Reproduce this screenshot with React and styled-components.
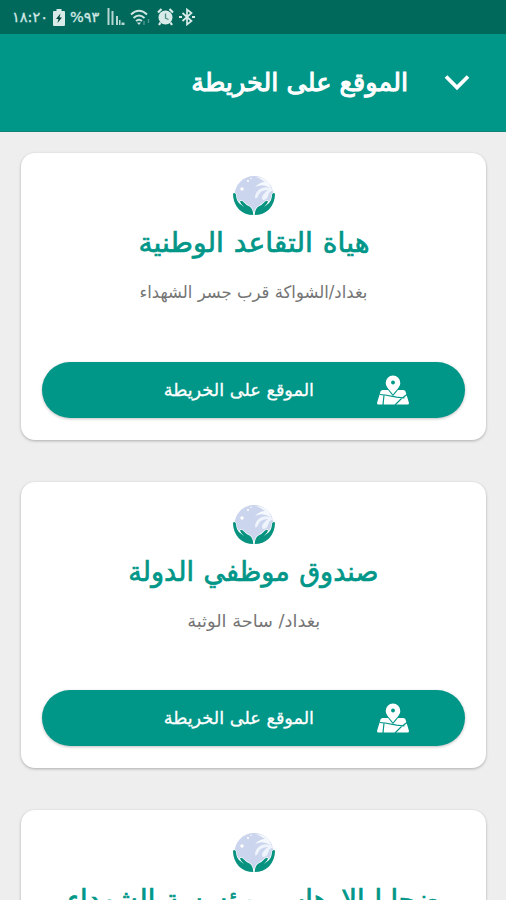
import React from 'react';
import styled, { createGlobalStyle } from 'styled-components';

const GlobalStyle = createGlobalStyle`
  * {
    box-sizing: border-box;
  }

  body {
    margin: 0;
    background: #eeeeee;
    font-family: 'DejaVu Sans', sans-serif;
  }
`;

const Screen = styled.div`
  width: 506px;
  height: 900px;
  overflow: hidden;
  background: #eeeeee;
`;

const StatusBar = styled.div`
  height: 34px;
  display: flex;
  align-items: center;
  gap: 5px;
  padding-left: 12px;
  background: #00695c;
  color: #d3e8e4;
`;

const StatusText = styled.span`
  width: ${props => props.$width}px;
  font-size: 14.5px;
  line-height: 20px;
  white-space: nowrap;
  direction: ltr;
  unicode-bidi: bidi-override;
  -webkit-text-stroke: 0.3px currentColor;
`;

const Header = styled.header`
  height: 98px;
  display: flex;
  align-items: center;
  direction: rtl;
  padding: 0 36px 2px 0;
  background: #009688;
  border-bottom: 1px solid #148377;
`;

const HeaderTitle = styled.h1`
  margin: 0 36px 0 0;
  font-size: 25.5px;
  line-height: 36px;
  font-weight: 400;
  color: #ffffff;
  white-space: nowrap;
  -webkit-text-stroke: 1px currentColor;
`;

const List = styled.main`
  display: flex;
  flex-direction: column;
  gap: 42px;
  padding: 21px 20px 0 21px;
`;

const Card = styled.section`
  height: 286.5px;
  flex: none;
  display: flex;
  flex-direction: column;
  align-items: center;
  padding: 22px 21px;
  background: #ffffff;
  border-radius: 14px;
  box-shadow: 0 1px 3px rgba(0, 0, 0, 0.28);
  direction: rtl;
`;

const CardTitle = styled.h2`
  margin: 7px 0 0;
  font-size: 27.5px;
  line-height: 36px;
  font-weight: 400;
  word-spacing: 1px;
  color: #009688;
  white-space: nowrap;
  transform: scaleX(${props => props.$stretch});
  -webkit-text-stroke: 0.7px currentColor;
`;

const Address = styled.p`
  margin: 18px 0 0;
  height: 28px;
  font-size: 17px;
  line-height: 28px;
  color: #757575;
  white-space: nowrap;
  transform: scaleX(${props => props.$stretch});
`;

const MapButton = styled.button`
  width: 423px;
  height: 56px;
  margin-top: auto;
  display: flex;
  align-items: center;
  padding: 0 56px 0 0;
  border: 0;
  border-radius: 28px;
  background: #009688;
  color: #ffffff;
  font-family: inherit;
  font-size: 17.7px;
  box-shadow: 0 1px 3px rgba(0, 0, 0, 0.25);
`;

const ButtonLabel = styled.span`
  margin-right: 63px;
  line-height: 28px;
  white-space: nowrap;
  -webkit-text-stroke: 0.3px currentColor;
`;

const BatteryIcon = () => (
  <svg width="12" height="17" viewBox="0 0 12 17">
    <path d="M3.5 0h5v2H11a1 1 0 0 1 1 1v13a1 1 0 0 1-1 1H1a1 1 0 0 1-1-1V3a1 1 0 0 1 1-1h2.500z" fill="#d9ebe8" />
    <path d="M7.500 4.500 3 10h2.500l-1 4L9 8.500H6.500z" fill="#00473e" />
  </svg>
);

const SignalIcon = () => (
  <svg width="18" height="18" viewBox="0 0 18 18" fill="#b5d6d1">
    <path d="M.5 0h2v17h-2zM4.500 3h2v14h-2zM9 8h2v9H9zM12 12h1.500v5H12zM14.500 14.500h3V17h-3z" />
  </svg>
);

const WifiIcon = () => (
  <svg width="22" height="17" viewBox="0 0 22 17" fill="none" stroke="#cfe5e1" strokeWidth="2">
    <path d="M1 5.500Q9 -2 17 5.500M3.500 9Q9 4 14.500 9M6 12Q9 9.500 12 12" />
    <path d="M7 13.500h4L9 16z" fill="#cfe5e1" stroke="none" />
    <path d="M14 12v4M18.500 10v4" stroke="#4b958b" strokeWidth="1.500" />
  </svg>
);

const AlarmIcon = () => (
  <svg width="17" height="18" viewBox="0 0 17 18">
    <path d="M1 4.500 4.500 1M16 4.500 12.500 1M3.500 14.500 2 17M13.500 14.500 15 17" stroke="#d9ebe8" strokeWidth="2.200" />
    <circle cx="8.500" cy="9.500" r="7" fill="#d9ebe8" />
    <path d="M8.500 5.500V10l3 1.500" fill="none" stroke="#4c9187" strokeWidth="1.300" />
  </svg>
);

const BluetoothIcon = () => (
  <svg width="16" height="18" viewBox="0 0 16 18" fill="none" stroke="#d9ebe8" strokeWidth="1.700">
    <path d="m3.500 5 9 8-4.500 3.500v-15L12.500 5l-9 8" />
    <path d="M0 9h3M13 9h3" strokeWidth="2.200" />
  </svg>
);

const ChevronIcon = () => (
  <svg width="26" height="18" viewBox="0 0 26 18" fill="none" stroke="#ffffff" strokeWidth="3.800">
    <path d="M2 3.500 13 14.500 24 3.500" />
  </svg>
);

const handPath =
  'M0 19Q1 17 3 19.500 3 25 6.500 28.500L11 32Q7.500 28.500 7 26.500 8.500 24.500 11 27.500 13 30 16.500 31.500 20 33.500 20.300 40 12 40 6 34.500 0 28 0 19z';

const LogoIcon = () => (
  <svg width="42" height="42" viewBox="0 0 42 42">
    <circle cx="21" cy="20.500" r="19.500" fill="#cbd5ed" />
    <path d="M23 2q8 0 13 6l4 9-3-4q-7-5-15-1 5-5 10-5-4-3-9-5z" fill="#f5f8fd" />
    <path d="M41 15q-5 1-6 6-1 4-5 4-2-2 0-5 2-3 5-5-8 0-10 6-1 3-3 2 0-7 7-10 6-2 12 2z" fill="#eff4fc" />
    <circle cx="9" cy="14" r="1.700" fill="#ffffff" />
    <circle cx="15" cy="6" r="1.100" fill="#ffffff" />
    <circle cx="18" cy="3.500" r=".7" fill="#ffffff" />
    <path d="M1 28 7 27 12 30 21 37.500 30 30 35 27 41 28 36 42H6z" fill="#ffffff" />
    <g fill="#07937f" stroke="#ffffff" strokeWidth="1.200" paintOrder="stroke">
      <path d={handPath} />
      <path d={handPath} transform="matrix(-1 0 0 1 42 0)" />
    </g>
  </svg>
);

const MapPinIcon = () => (
  <svg width="32" height="30" viewBox="0 0 32 30">
    <path d="M5.500 15h21q1.500 0 2 1.500L32 28q0 1.500-1.500 1.500h-29Q0 29.500 0 28l3.500-11.500Q4 15 5.500 15z" fill="#ffffff" />
    <path d="M2.500 19.500 8 20l11.500 2.200 8 .8M7 20l-1 10M18 30l6-6 6-4.500" fill="none" stroke="#009688" strokeWidth="1.200" />
    <path
      d="M16 .5A7.300 7.300 0 0 1 23.300 8c0 3.500-3.800 7-7.300 11.500C12.500 15 8.700 11.500 8.700 8A7.300 7.300 0 0 1 16 .5z"
      fill="#ffffff"
      stroke="#009688"
      strokeWidth="2"
      paintOrder="stroke"
    />
    <circle cx="16" cy="7.500" r="1.900" fill="#009688" />
  </svg>
);

const places = [
  {
    name: 'هياة التقاعد الوطنية',
    nameStretch: 1.022,
    address: 'بغداد/الشواكة قرب جسر الشهداء',
    addressStretch: 0.97,
  },
  {
    name: 'صندوق موظفي الدولة',
    nameStretch: 0.982,
    address: 'بغداد/ ساحة الوثبة',
    addressStretch: 1.045,
  },
  {
    name: 'ضحايا الارهاب ومؤسسة الشهداء',
    nameStretch: 1,
    address: 'بغداد',
    addressStretch: 1,
  },
];

const PlaceCard = ({ name, nameStretch, address, addressStretch }) => (
  <Card>
    <LogoIcon />
    <CardTitle $stretch={nameStretch}>{name}</CardTitle>
    <Address $stretch={addressStretch}>{address}</Address>
    <MapButton>
      <MapPinIcon />
      <ButtonLabel>الموقع على الخريطة</ButtonLabel>
    </MapButton>
  </Card>
);

const App = () => (
  <Screen>
    <GlobalStyle />
    <StatusBar>
      <StatusText $width={36}>١٨:٢٠</StatusText>
      <BatteryIcon />
      <StatusText $width={32}>%٩٣</StatusText>
      <SignalIcon />
      <WifiIcon />
      <AlarmIcon />
      <BluetoothIcon />
    </StatusBar>
    <Header>
      <ChevronIcon />
      <HeaderTitle>الموقع على الخريطة</HeaderTitle>
    </Header>
    <List>
      {places.map(place => (
        <PlaceCard key={place.name} {...place} />
      ))}
    </List>
  </Screen>
);

export default App;
